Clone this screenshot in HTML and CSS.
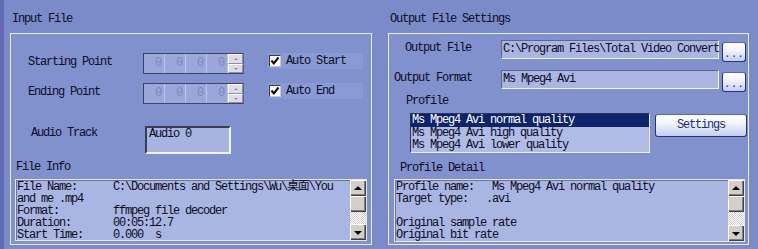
FILE: index.html
```
<!DOCTYPE html>
<html lang="en">
<head>
	<meta charset="UTF-8">
	<title>Convert Settings</title>
	<link rel="stylesheet" href="styles.css">
</head>
<body>
	<div class="window">
		<div class="panel left">
			<div class="panel-title">Input File</div>
			<div class="group">
				<div class="point-row first">
					<span class="point-label">Starting Point</span>
					<div class="spin">
						<span class="cell">0</span><span class="cell">0</span><span class="cell">0</span><span class="cell">0</span>
						<div class="spin-btns"><span class="sbtn up"></span><span class="sbtn down"></span></div>
					</div>
					<div class="check"><span class="box"><svg width="10" height="10" viewBox="0 0 10 10"><polyline points="1.5,4.5 3.8,7.3 8.5,1.5" fill="none" stroke="#000" stroke-width="2"/></svg></span>Auto Start</div>
				</div>
				<div class="point-row second">
					<span class="point-label">Ending Point</span>
					<div class="spin">
						<span class="cell">0</span><span class="cell">0</span><span class="cell">0</span><span class="cell">0</span>
						<div class="spin-btns"><span class="sbtn up"></span><span class="sbtn down"></span></div>
					</div>
					<div class="check"><span class="box"><svg width="10" height="10" viewBox="0 0 10 10"><polyline points="1.5,4.5 3.8,7.3 8.5,1.5" fill="none" stroke="#000" stroke-width="2"/></svg></span>Auto End</div>
				</div>
				<div class="audio-row">
					<span class="audio-label">Audio Track</span>
					<div class="audio-box">Audio 0</div>
				</div>
				<div class="sub-title info-title">File Info</div>
				<div class="memo info-memo">
<pre class="memo-text">File Name:      C:\Documents and Settings\Wu\桌面\You
and me .mp4
Format:         ffmpeg file decoder
Duration:       00:05:12.7
Start Time:     0.000  s</pre>
					<div class="vscroll">
						<span class="sb-btn"><i class="arr-up"></i></span>
						<span class="sb-thumb"></span>
						<span class="sb-track"></span>
						<span class="sb-btn"><i class="arr-down"></i></span>
					</div>
				</div>
			</div>
		</div>
		<div class="panel right">
			<div class="panel-title">Output File Settings</div>
			<div class="group">
				<div class="out-row first">
					<span class="out-label file-label">Output File</span>
					<div class="field">C:\Program Files\Total Video Convert</div>
					<div class="dots">...</div>
				</div>
				<div class="out-row second">
					<span class="out-label format-label">Output Format</span>
					<div class="field">Ms Mpeg4 Avi</div>
					<div class="dots">...</div>
				</div>
				<div class="sub-title profile-title">Profile</div>
				<div class="profile-row">
					<div class="list">
						<div class="item selected">Ms Mpeg4 Avi normal quality</div>
						<div class="item">Ms Mpeg4 Avi high quality</div>
						<div class="item">Ms Mpeg4 Avi lower quality</div>
					</div>
					<div class="settings-btn">Settings</div>
				</div>
				<div class="sub-title detail-title">Profile Detail</div>
				<div class="memo detail-memo">
<pre class="memo-text">Profile name:   Ms Mpeg4 Avi normal quality
Target type:   .avi

Original sample rate
Original bit rate</pre>
					<div class="vscroll">
						<span class="sb-btn"><i class="arr-up"></i></span>
						<span class="sb-thumb"></span>
						<span class="sb-track"></span>
						<span class="sb-btn"><i class="arr-down"></i></span>
					</div>
				</div>
			</div>
		</div>
	</div>
</body>
</html>
```

FILE: styles.css
```
body{
	margin: 0;
	width: 758px;
	height: 249px;
	overflow: hidden;
	box-sizing: border-box;
	border-left: 4px solid #5f6bb2;
	background: #7b8bc9;
	font-family: "Liberation Mono", "Noto Sans CJK SC", monospace;
	font-size: 12px;
	letter-spacing: -1.2px;
	color: #0c0c24;
}
.window{
	display: flex;
	padding-left: 6px;
}
.panel.left{
	width: 362px;
}
.panel.right{
	width: 361px;
	margin-left: 16px;
}
.panel-title{
	padding-top: 12px;
	padding-left: 2px;
	height: 14px;
	line-height: 14px;
	margin-bottom: 7px;
	white-space: nowrap;
}
.group{
	box-sizing: border-box;
	height: 212px;
	border: 1px solid #e9ecfa;
	background: #8191ce;
}

/* input side */
.point-row{
	display: flex;
	align-items: flex-start;
}
.point-row.first{
	margin-top: 19px;
}
.point-row.second{
	margin-top: 9px;
}
.point-label{
	box-sizing: border-box;
	width: 132px;
	padding-left: 17px;
	line-height: 18px;
	white-space: nowrap;
}
.spin{
	box-sizing: border-box;
	width: 101px;
	height: 21px;
	border: 1px solid #3e4466;
	border-right-color: #5c6488;
	background: #9ba7d8;
	display: flex;
}
.cell{
	box-sizing: border-box;
	width: 21px;
	padding-right: 3px;
	text-align: right;
	line-height: 18px;
	color: #7b87bd;
	border-right: 1px solid #bcc5ec;
}
.spin-btns{
	width: 15px;
	display: flex;
	flex-direction: column;
}
.sbtn{
	flex: 1;
	position: relative;
	background: #dcdde6;
	border-top: 1px solid #fff;
	border-left: 1px solid #fff;
	border-bottom: 1px solid #8a90a8;
	border-right: 1px solid #8a90a8;
}
.sbtn::after{
	content: "";
	position: absolute;
	left: 5px;
	top: 3px;
	border-left: 2px solid transparent;
	border-right: 2px solid transparent;
}
.sbtn.up::after{
	border-bottom: 2px solid #8a8fa6;
}
.sbtn.down::after{
	border-top: 2px solid #8a8fa6;
}
.check{
	margin-left: 24px;
	width: 95px;
	height: 16px;
	background: #8a9ad5;
	display: flex;
	align-items: center;
	white-space: nowrap;
}
.box{
	box-sizing: border-box;
	width: 12px;
	height: 12px;
	margin-left: 1px;
	margin-right: 5px;
	background: #fff;
	border: 1px solid #3a3a4a;
	border-right-color: #c8c8d0;
	border-bottom-color: #c8c8d0;
	display: flex;
	align-items: center;
	justify-content: center;
}
.audio-row{
	display: flex;
	align-items: flex-start;
	margin-top: 22px;
}
.audio-label{
	box-sizing: border-box;
	width: 134px;
	padding-left: 20px;
	line-height: 14px;
}
.audio-box{
	box-sizing: border-box;
	width: 86px;
	height: 28px;
	padding-left: 2px;
	line-height: 12px;
	background: #a7b3e1;
	border: 2px solid #f2f4fc;
	border-top-color: #3c3c50;
	border-left-color: #3c3c50;
}
.sub-title{
	line-height: 14px;
	white-space: nowrap;
}
.info-title{
	margin-top: 6px;
	padding-left: 5px;
}
.memo{
	box-sizing: border-box;
	display: flex;
	background: #aab6e2;
	border: 1px solid #e3e7f7;
	box-shadow: inset 1px 1px 0 #6a74a4;
}
.info-memo{
	margin-top: 5px;
	margin-left: 4px;
	width: 352px;
	height: 62px;
}
.memo-text{
	flex: 1;
	margin: 0;
	padding: 1px 0 0 1px;
	font: inherit;
	line-height: 12px;
	white-space: pre;
}
.vscroll{
	width: 16px;
	display: flex;
	flex-direction: column;
}
.sb-btn, .sb-thumb{
	height: 16px;
	flex: none;
	background: #d4d0c8;
	box-shadow: inset 1px 1px 0 #fff, inset -1px -1px 0 #404040, inset -2px -2px 0 #808080;
	display: flex;
	align-items: center;
	justify-content: center;
}
.sb-track{
	flex: 1;
	background: repeating-conic-gradient(#ffffff 0 25%, #d4d0c8 0 50%) 0 0 / 2px 2px;
}
.arr-up{
	border-left: 4px solid transparent;
	border-right: 4px solid transparent;
	border-bottom: 4px solid #000;
	margin-top: -1px;
}
.arr-down{
	border-left: 4px solid transparent;
	border-right: 4px solid transparent;
	border-top: 4px solid #000;
	margin-top: 1px;
}

/* output side */
.out-row{
	display: flex;
	align-items: flex-start;
	height: 22px;
}
.out-row.first{
	margin-top: 6px;
}
.out-row.second{
	margin-top: 8px;
}
.out-label{
	box-sizing: border-box;
	width: 112px;
	line-height: 17px;
	white-space: nowrap;
}
.file-label{
	padding-left: 16px;
}
.format-label{
	padding-left: 5px;
}
.field{
	box-sizing: border-box;
	width: 218px;
	height: 19px;
	padding-left: 1px;
	line-height: 17px;
	white-space: nowrap;
	background: #aab5e1;
	border: 1px solid #f2f4fc;
	border-top-color: #5c6690;
	border-left-color: #5c6690;
}
.dots, .settings-btn{
	box-sizing: border-box;
	border: 1px solid #25357c;
	border-top-color: #5a6aa8;
	border-radius: 3px;
	background: linear-gradient(#ffffff, #f0f4fe 40%, #c3cff0);
	color: #1c2c80;
	text-align: center;
}
.dots{
	width: 24px;
	height: 20px;
	margin-left: 3px;
	margin-top: 2px;
	line-height: 22px;
	letter-spacing: 0;
	font-size: 11px;
}
.profile-title{
	margin-top: 2px;
	padding-left: 17px;
}
.profile-row{
	display: flex;
	align-items: flex-start;
	margin-top: 5px;
}
.list{
	box-sizing: border-box;
	width: 240px;
	height: 40px;
	margin-left: 21px;
	background: #b0bbe6;
	border: 1px solid #eef0fb;
	border-top-color: #2e3458;
	border-left-color: #2e3458;
}
.item{
	height: 12.5px;
	line-height: 12px;
	padding-left: 1px;
	white-space: nowrap;
}
.item.selected{
	background: #0b246b;
	color: #fff;
}
.settings-btn{
	width: 92px;
	height: 23px;
	margin-left: 5px;
	margin-top: 1px;
	line-height: 21px;
}
.detail-title{
	margin-top: 8px;
	padding-left: 11px;
}
.detail-memo{
	margin-top: 4px;
	margin-left: 5px;
	width: 351px;
	height: 63px;
}
```
